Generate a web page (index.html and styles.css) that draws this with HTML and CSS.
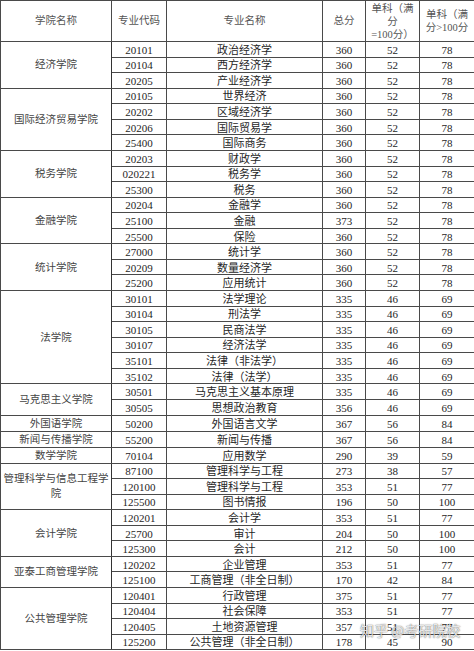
FILE: index.html
```html
<!DOCTYPE html>
<html lang="zh">
<head>
<meta charset="utf-8">
<title>分数线</title>
<link rel="stylesheet" href="styles.css">
</head>
<body>
<div class="page">
<table class="score">
<colgroup>
<col class="c1"><col class="c2"><col class="c3"><col class="c4"><col class="c5"><col class="c6">
</colgroup>
<thead>
<tr class="head">
<th>学院名称</th><th>专业代码</th><th>专业名称</th><th>总分</th><th class="wrap">单科（满<br>分<br>=100分）</th><th class="wrap">单科（满<br>分&gt;100分</th>
</tr>
</thead>
<tbody>
<tr><td rowspan="3" class="school">经济学院</td><td>20101</td><td>政治经济学</td><td>360</td><td>52</td><td>78</td></tr>
<tr><td>20104</td><td>西方经济学</td><td>360</td><td>52</td><td>78</td></tr>
<tr><td>20205</td><td>产业经济学</td><td>360</td><td>52</td><td>78</td></tr>
<tr><td rowspan="4" class="school">国际经济贸易学院</td><td>20105</td><td>世界经济</td><td>360</td><td>52</td><td>78</td></tr>
<tr><td>20202</td><td>区域经济学</td><td>360</td><td>52</td><td>78</td></tr>
<tr><td>20206</td><td>国际贸易学</td><td>360</td><td>52</td><td>78</td></tr>
<tr><td>25400</td><td>国际商务</td><td>360</td><td>52</td><td>78</td></tr>
<tr><td rowspan="3" class="school">税务学院</td><td>20203</td><td>财政学</td><td>360</td><td>52</td><td>78</td></tr>
<tr><td>020221</td><td>税务学</td><td>360</td><td>52</td><td>78</td></tr>
<tr><td>25300</td><td>税务</td><td>360</td><td>52</td><td>78</td></tr>
<tr><td rowspan="3" class="school">金融学院</td><td>20204</td><td>金融学</td><td>360</td><td>52</td><td>78</td></tr>
<tr><td>25100</td><td>金融</td><td>373</td><td>52</td><td>78</td></tr>
<tr><td>25500</td><td>保险</td><td>360</td><td>52</td><td>78</td></tr>
<tr><td rowspan="3" class="school">统计学院</td><td>27000</td><td>统计学</td><td>360</td><td>52</td><td>78</td></tr>
<tr><td>20209</td><td>数量经济学</td><td>360</td><td>52</td><td>78</td></tr>
<tr><td>25200</td><td>应用统计</td><td>360</td><td>52</td><td>78</td></tr>
<tr><td rowspan="6" class="school">法学院</td><td>30101</td><td>法学理论</td><td>335</td><td>46</td><td>69</td></tr>
<tr><td>30104</td><td>刑法学</td><td>335</td><td>46</td><td>69</td></tr>
<tr><td>30105</td><td>民商法学</td><td>335</td><td>46</td><td>69</td></tr>
<tr><td>30107</td><td>经济法学</td><td>335</td><td>46</td><td>69</td></tr>
<tr><td>35101</td><td>法律（非法学）</td><td>335</td><td>46</td><td>69</td></tr>
<tr><td>35102</td><td>法律（法学）</td><td>335</td><td>46</td><td>69</td></tr>
<tr><td rowspan="2" class="school">马克思主义学院</td><td>30501</td><td>马克思主义基本原理</td><td>335</td><td>46</td><td>69</td></tr>
<tr><td>30505</td><td>思想政治教育</td><td>356</td><td>46</td><td>69</td></tr>
<tr><td class="school">外国语学院</td><td>50200</td><td>外国语言文学</td><td>367</td><td>56</td><td>84</td></tr>
<tr><td class="school">新闻与传播学院</td><td>55200</td><td>新闻与传播</td><td>367</td><td>56</td><td>84</td></tr>
<tr><td class="school">数学学院</td><td>70104</td><td>应用数学</td><td>290</td><td>39</td><td>59</td></tr>
<tr><td rowspan="3" class="school">管理科学与信息工程学院</td><td>87100</td><td>管理科学与工程</td><td>273</td><td>38</td><td>57</td></tr>
<tr><td>120100</td><td>管理科学与工程</td><td>353</td><td>51</td><td>77</td></tr>
<tr><td>125500</td><td>图书情报</td><td>196</td><td>50</td><td>100</td></tr>
<tr><td rowspan="3" class="school">会计学院</td><td>120201</td><td>会计学</td><td>353</td><td>51</td><td>77</td></tr>
<tr><td>25700</td><td>审计</td><td>204</td><td>50</td><td>100</td></tr>
<tr><td>125300</td><td>会计</td><td>212</td><td>50</td><td>100</td></tr>
<tr><td rowspan="2" class="school">亚泰工商管理学院</td><td>120202</td><td>企业管理</td><td>353</td><td>51</td><td>77</td></tr>
<tr><td>125100</td><td>工商管理（非全日制）</td><td>170</td><td>42</td><td>84</td></tr>
<tr><td rowspan="4" class="school">公共管理学院</td><td>120401</td><td>行政管理</td><td>375</td><td>51</td><td>77</td></tr>
<tr><td>120404</td><td>社会保障</td><td>353</td><td>51</td><td>77</td></tr>
<tr><td>120405</td><td>土地资源管理</td><td>357</td><td>51</td><td>77</td></tr>
<tr><td>125200</td><td>公共管理（非全日制）</td><td>178</td><td>45</td><td>90</td></tr>
</tbody>
</table>
<div class="watermark">知乎 @考研院校</div>
</div>
</body>
</html>
```

FILE: styles.css
```css
html, body {
  margin: 0;
  padding: 0;
  background: #ffffff;
}

.page {
  position: relative;
  width: 474px;
  height: 651px;
  overflow: hidden;
}

.score {
  width: 474px;
  table-layout: fixed;
  border-collapse: collapse;
  font-family: "Liberation Serif", "Noto Sans CJK SC", serif;
  font-size: 10.5px;
  color: #262626;
}

.c1 { width: 111px; }
.c2 { width: 55px; }
.c3 { width: 156px; }
.c4 { width: 43px; }
.c5 { width: 54px; }
.c6 { width: 55px; }

.score th,
.score td {
  border: 1px solid #4a4a4a;
  padding: 0 2px;
  text-align: center;
  vertical-align: middle;
  font-weight: normal;
  line-height: 12px;
  white-space: nowrap;
  overflow: hidden;
}

.score th {
  color: #555;
}

.score .wrap {
  line-height: 13px;
}

.head {
  height: 41px;
}

.score tbody tr {
  height: 15.57px;
}

.score td.school {
  white-space: normal;
  word-break: break-all;
  line-height: 15px;
  color: #444;
  border-right-color: #333;
}

.score td:not(.school) {
  padding-top: 1px;
  font-size: 11px;
}

.watermark {
  position: absolute;
  left: 360px;
  top: 621px;
  font-family: "Noto Sans CJK SC", sans-serif;
  font-size: 14px;
  line-height: 18px;
  color: rgba(255, 255, 255, 0.85);
  text-shadow: 0 0 1px rgba(0, 0, 0, 0.6), 0 0 2px rgba(0, 0, 0, 0.3);
  white-space: nowrap;
}
```
